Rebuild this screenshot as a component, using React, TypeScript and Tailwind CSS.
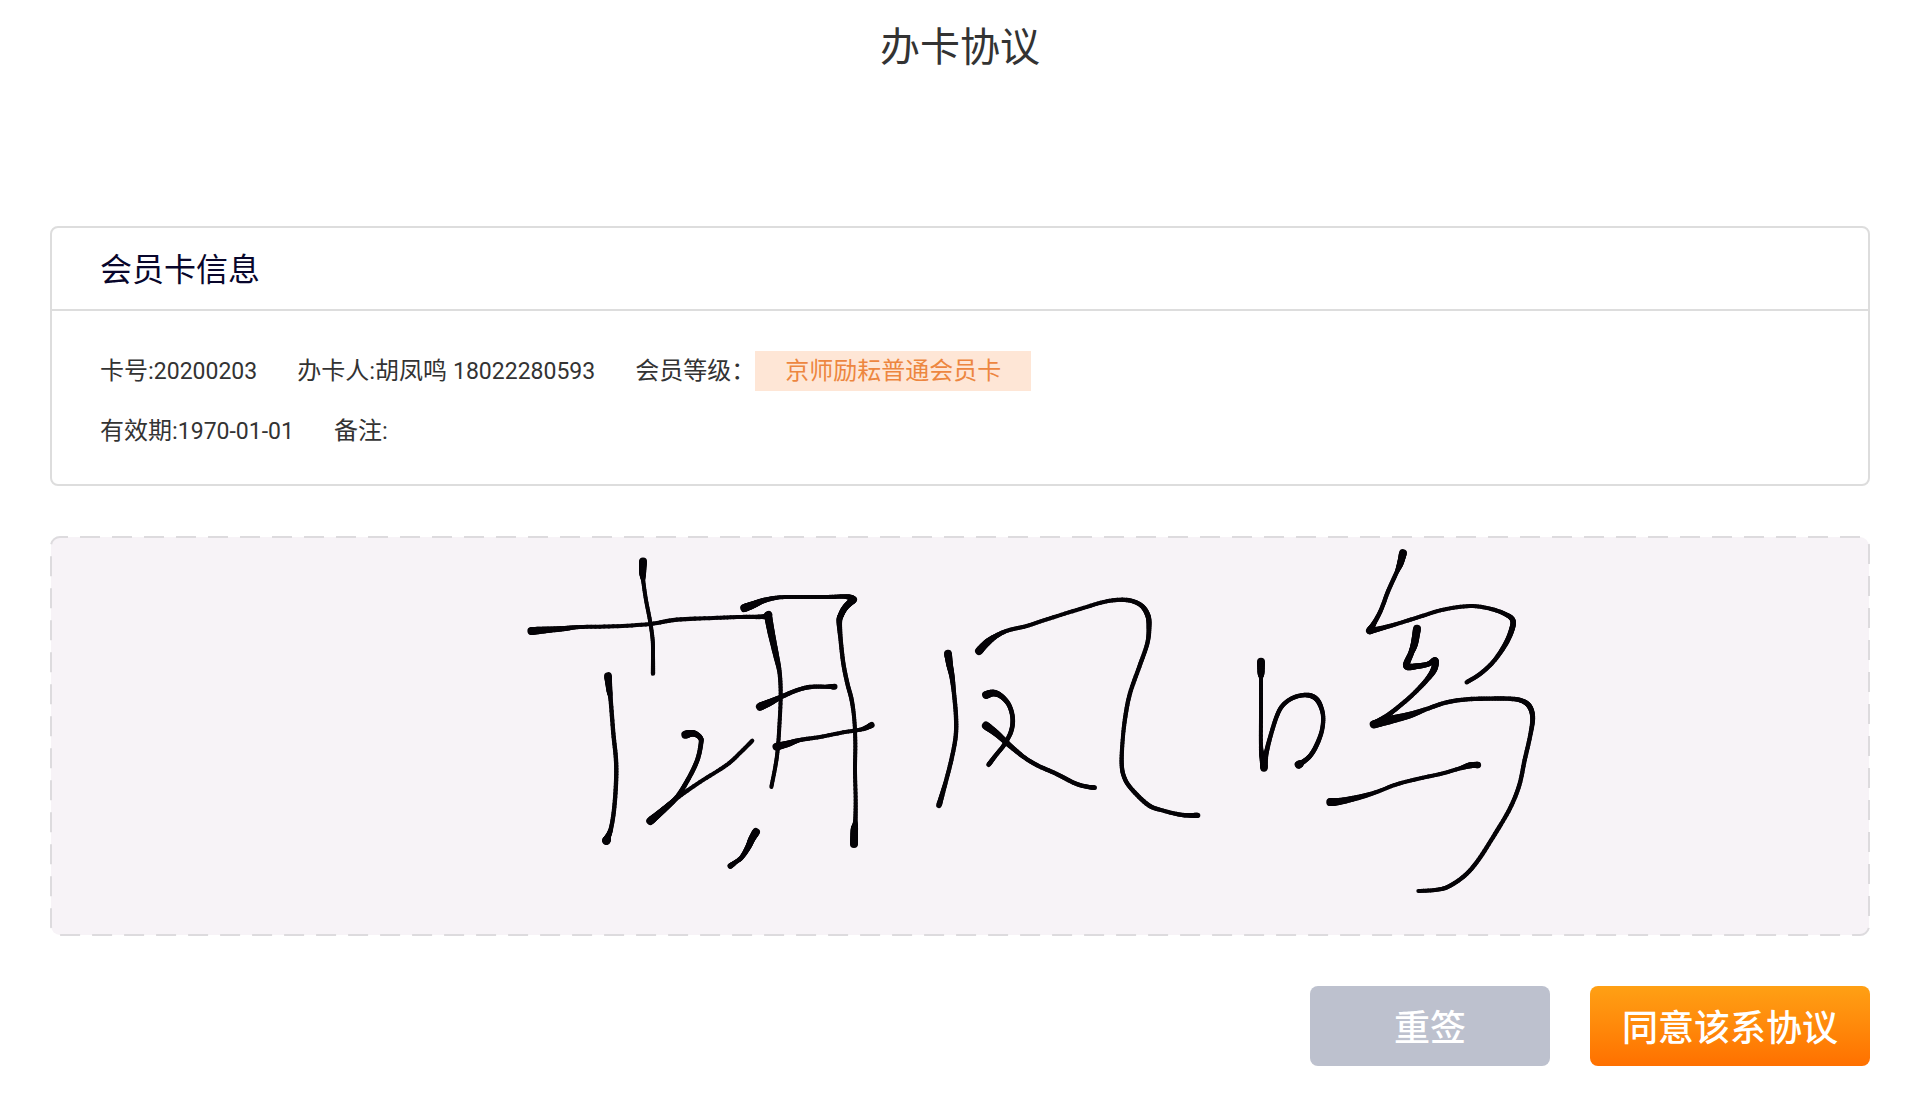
import { useState } from "react";

// x, y, pen width
type Point = [number, number, number];

interface Glyph {
  x: number;
  y: number;
  strokes: Point[][];
}

// pen samples are stored at three times the pad's resolution
const PEN_SCALE = 3;

const signature: Glyph[] = [
  {
    x: 450,
    y: -6,
    strokes: [
      [[94, 303, 24], [120, 301, 22], [190, 296, 16], [240, 291, 12], [340, 289, 12], [450, 282, 12], [530, 269, 13], [640, 264, 12], [720, 261, 12], [790, 260, 14], [806, 254, 22]],
      [[804, 256, 24], [814, 310, 22], [828, 375, 18], [839, 430, 13], [842, 500, 12], [838, 590, 12], [833, 660, 12], [826, 710, 12], [814, 771, 12]],
      [[429, 94, 24], [428, 128, 21], [430, 155, 12], [438, 210, 12], [450, 272, 12], [458, 330, 12], [459, 380, 12], [459, 431, 13]],
      [[324, 438, 24], [328, 480, 18], [332, 510, 13], [340, 610, 13], [348, 690, 13], [348, 760, 13], [342, 840, 13], [333, 895, 13], [323, 922, 18], [319, 932, 26]],
      [[556, 614, 25], [580, 610, 19], [600, 622, 15], [603, 640, 14], [592, 690, 14], [566, 745, 14], [530, 802, 14], [492, 838, 18], [451, 873, 24]],
      [[451, 873, 22], [490, 840, 18], [530, 805, 13], [600, 756, 12], [680, 705, 12], [725, 664, 12], [757, 632, 12]],
      [[768, 906, 24], [755, 928, 21], [744, 952, 18], [725, 982, 14], [706, 997, 13], [691, 1008, 17]],
      [[733, 234, 25], [760, 224, 22], [793, 211, 16], [840, 202, 12], [900, 201, 12], [980, 201, 12], [1040, 200, 14], [1060, 209, 22]],
      [[1060, 209, 22], [1036, 232, 19], [1023, 255, 18], [1018, 275, 17], [1022, 330, 13], [1030, 400, 13], [1042, 460, 13], [1055, 510, 13], [1063, 570, 12], [1066, 640, 12], [1065, 720, 12], [1067, 810, 12], [1066, 875, 13], [1063, 900, 22], [1062, 942, 24]],
      [[780, 530, 25], [810, 517, 21], [845, 500, 14], [890, 481, 13], [930, 471, 13], [980, 470, 12], [1004, 470, 17]],
      [[829, 650, 24], [865, 641, 19], [900, 630, 13], [960, 621, 12], [1030, 607, 12], [1085, 598, 12], [1115, 585, 18]],
    ],
  },
  {
    x: 850,
    y: 34,
    strokes: [
      [[144, 251, 24], [149, 285, 20], [156, 320, 16], [162, 370, 13], [168, 440, 13], [167, 500, 13], [154, 570, 13], [136, 640, 13], [117, 706, 17]],
      [[237, 243, 24], [262, 217, 21], [290, 197, 15], [325, 181, 12], [380, 168, 12], [450, 145, 12], [540, 117, 12], [620, 94, 12], [680, 90, 13], [722, 105, 14], [743, 135, 16], [747, 170, 15], [742, 220, 13], [718, 290, 13], [690, 370, 13], [676, 440, 13], [668, 510, 12], [665, 580, 13], [672, 620, 13], [693, 655, 13], [745, 705, 14], [790, 722, 12], [840, 734, 13], [870, 736, 14], [893, 736, 16]],
      [[258, 375, 24], [280, 369, 20], [303, 378, 16], [327, 405, 14], [338, 445, 14], [333, 485, 14], [312, 525, 13], [288, 555, 13], [266, 584, 14]],
      [[258, 467, 25], [290, 491, 20], [330, 527, 16], [370, 560, 13], [410, 585, 13], [470, 612, 13], [525, 640, 13], [560, 650, 13], [584, 653, 14]],
    ],
  },
  {
    x: 1180,
    y: -6,
    strokes: [
      [[93, 395, 24], [93, 428, 21], [93, 450, 12], [93, 550, 12], [93, 650, 12], [98, 685, 18], [102, 714, 22]],
      [[102, 712, 22], [108, 672, 15], [121, 620, 13], [138, 565, 13], [155, 530, 13], [182, 507, 13], [215, 496, 13], [245, 498, 15], [266, 516, 15], [279, 555, 13], [276, 600, 13], [260, 645, 14], [240, 678, 14], [216, 698, 15], [206, 704, 24]],
      [[519, 69, 24], [511, 100, 20], [500, 127, 13], [475, 182, 13], [453, 240, 13], [432, 280, 14], [419, 302, 22]],
      [[419, 303, 20], [450, 296, 15], [500, 282, 12], [570, 260, 12], [640, 239, 12], [720, 228, 12], [780, 236, 12], [825, 252, 13], [848, 270, 16], [845, 300, 17], [825, 345, 15], [790, 395, 13], [750, 432, 13], [710, 457, 13]],
      [[561, 296, 24], [553, 342, 22], [543, 370, 17], [530, 408, 21], [565, 408, 17], [595, 402, 15], [616, 391, 18], [612, 418, 20], [590, 450, 15], [550, 492, 13], [510, 527, 13], [470, 558, 14], [431, 583, 20]],
      [[431, 583, 24], [480, 570, 25], [540, 555, 20], [590, 537, 13], [650, 517, 13], [710, 508, 13], [770, 506, 13], [835, 506, 13], [875, 512, 14], [899, 530, 16], [908, 565, 15], [900, 620, 13], [884, 690, 13], [868, 765, 13], [840, 835, 13], [795, 912, 13], [745, 990, 13], [705, 1036, 13], [655, 1070, 13], [615, 1080, 12], [565, 1083, 12]],
      [[301, 816, 25], [330, 814, 21], [390, 801, 16], [440, 786, 12], [500, 763, 12], [570, 745, 12], [635, 731, 12], [690, 715, 12], [720, 706, 18], [744, 705, 19]],
    ],
  },
];

function spline(a: number, b: number, c: number, d: number, t: number): number {
  return (
    0.5 *
    (2 * b +
      (c - a) * t +
      (2 * a - 5 * b + 4 * c - d) * t * t +
      (3 * b - a - 3 * c + d) * t * t * t)
  );
}

function smooth(points: Point[], steps = 8): Point[] {
  const result: Point[] = [points[0]];
  for (let i = 0; i < points.length - 1; i++) {
    const a = points[Math.max(i - 1, 0)];
    const b = points[i];
    const c = points[i + 1];
    const d = points[Math.min(i + 2, points.length - 1)];
    for (let step = 1; step <= steps; step++) {
      const t = step / steps;
      result.push([
        spline(a[0], b[0], c[0], d[0], t),
        spline(a[1], b[1], c[1], d[1], t),
        b[2] + (c[2] - b[2]) * t,
      ]);
    }
  }
  return result;
}

function PenStroke({ points }: { points: Point[] }) {
  const path = smooth(points);
  return (
    <>
      {path.slice(1).map(([x, y, width], i) => (
        <line key={i} x1={path[i][0]} y1={path[i][1]} x2={x} y2={y} strokeWidth={width} />
      ))}
    </>
  );
}

function SignaturePad({ signed }: { signed: boolean }) {
  return (
    <section aria-label="签名" className="mt-[50px]">
      <svg viewBox="0 0 1820 400" className="block w-full" role="img" aria-label="签名区域">
        <rect
          x={1}
          y={1}
          width={1818}
          height={398}
          rx={9}
          fill="#f7f3f7"
          stroke="#dddbde"
          strokeWidth={2}
          strokeDasharray="20 12"
          strokeDashoffset={12}
        />
        {signed &&
          signature.map((glyph) => (
            <g
              key={glyph.x}
              transform={`translate(${glyph.x} ${glyph.y}) scale(${1 / PEN_SCALE})`}
              stroke="#050307"
              strokeLinecap="round"
            >
              {glyph.strokes.map((points, i) => (
                <PenStroke key={i} points={points} />
              ))}
            </g>
          ))}
      </svg>
    </section>
  );
}

function Field({ label, value }: { label: string; value?: string }) {
  return (
    <span>
      {label}:<span className="text-[23px] leading-none">{value}</span>
    </span>
  );
}

function CardInfo() {
  return (
    <section className="rounded-lg border-2 border-[#dddddd]">
      <h2 className="border-b-2 border-[#dddddd] px-12 pt-[18px] pb-[15px] text-[32px] leading-12 text-[#08062b]">
        会员卡信息
      </h2>
      <div className="px-12 pt-[30px] pb-[23px] text-2xl leading-[60px] text-[#333333]">
        <div className="flex flex-wrap items-center gap-x-10">
          <Field label="卡号" value="20200203" />
          <span>
            办卡人:胡凤鸣 <span className="text-[23px] leading-none">18022280593</span>
          </span>
          <span className="flex items-center">
            会员等级：
            <span className="bg-[#fee6d6] px-[30px] leading-10 text-[#ed8640]">
              京师励耘普通会员卡
            </span>
          </span>
        </div>
        <div className="flex flex-wrap items-center gap-x-10">
          <Field label="有效期" value="1970-01-01" />
          <Field label="备注" />
        </div>
      </div>
    </section>
  );
}

export default function App() {
  const [signed, setSigned] = useState(true);

  return (
    <main className="min-h-screen bg-white px-[50px] pb-[50px] font-[Roboto,'Noto_Sans_CJK_SC',sans-serif]">
      <h1 className="pt-[18px] text-center text-[40px] leading-[60px] text-[#333333]">办卡协议</h1>
      <div className="mt-[148px]">
        <CardInfo />
      </div>
      <SignaturePad signed={signed} />
      <div className="mt-[50px] flex justify-end gap-10 text-4xl font-medium text-white">
        <button
          type="button"
          onClick={() => setSigned(false)}
          className="h-20 w-60 rounded-lg bg-[#bdc1ce] pt-1.5"
        >
          重签
        </button>
        <button
          type="button"
          className="h-20 w-70 rounded-lg bg-linear-to-b from-[#ffa014] to-[#ff7000] pt-1.5"
        >
          同意该系协议
        </button>
      </div>
    </main>
  );
}
